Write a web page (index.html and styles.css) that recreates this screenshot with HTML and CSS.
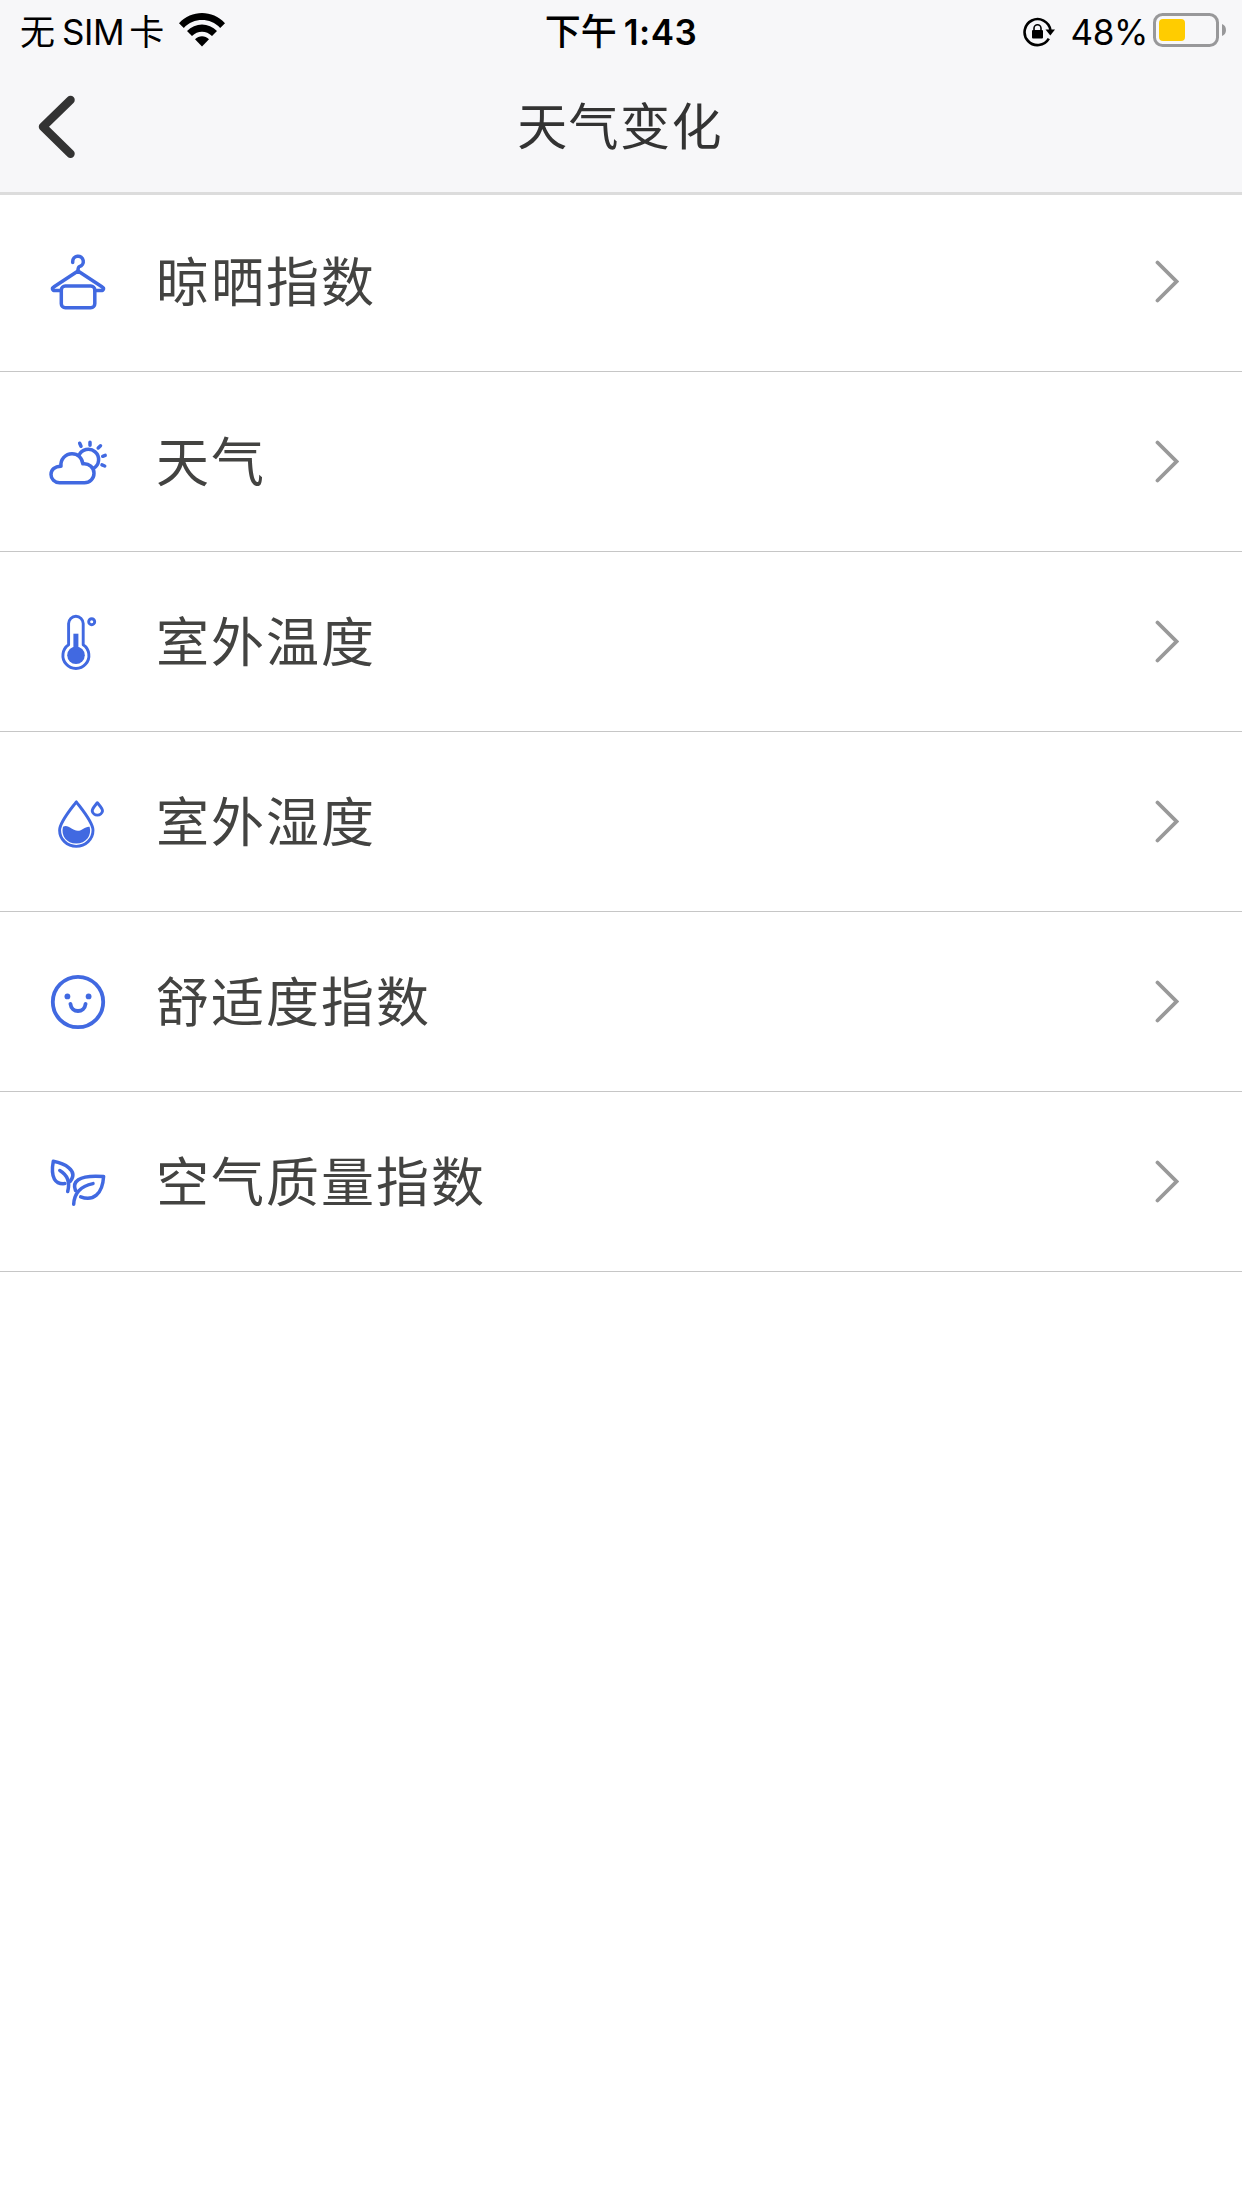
FILE: index.html
```html
<!DOCTYPE html>
<html lang="zh-CN">
<head>
    <meta charset="UTF-8">
    <meta name="viewport" content="width=device-width, initial-scale=1.0">
    <title>天气变化</title>
    <link rel="stylesheet" href="styles.css">
</head>
<body>
    <header class="header">
        <!-- Status bar -->
        <div class="status-bar">
            <div class="status-left">
                <span class="carrier">无<span class="sim">SIM</span>卡</span>
                <svg class="wifi" width="46" height="34" viewBox="0 0 46 34">
                    <path d="M0 10.2C12.5-3.4 33.5-3.4 46 10.2L41.2 15C31.2 4.4 14.8 4.4 4.8 15Z"/>
                    <path d="M8 18C16.2 9.2 29.8 9.2 38 18L33 23C27.4 17.2 18.6 17.2 13 23Z"/>
                    <path d="M16 26.2C20 22.2 26 22.2 30 26.2L23 33.5Z"/>
                </svg>
            </div>
            <div class="status-time">下午<span class="clock">1:43</span></div>
            <div class="status-right">
                <svg class="rotation-lock" width="32" height="30" viewBox="0 0 32 30">
                    <path class="ring" d="M25.8 21.7A13 13 0 1 1 27.4 13"/>
                    <path d="M22.5 12.5H32L27.3 18.6Z"/>
                    <rect x="9" y="13" width="11" height="8.5" rx="1"/>
                    <path class="shackle" d="M11 14V11.2A3.4 3.4 0 0 1 18 11.2V14"/>
                </svg>
                <span class="percent">48%</span>
                <svg class="battery" width="74" height="34" viewBox="0 0 74 34">
                    <rect class="case" x="1.5" y="1.5" width="63" height="31" rx="8"/>
                    <rect class="level" x="6" y="6" width="26" height="22" rx="4"/>
                    <path class="nub" d="M69 11C74.3 12.5 74.3 21.5 69 23Z"/>
                </svg>
            </div>
        </div>

        <!-- Navigation bar -->
        <nav class="nav-bar">
            <a class="back" href="#">
                <svg width="40" height="64" viewBox="0 0 40 64">
                    <path d="M34.5 5L7 31.8L34.5 58.7"/>
                </svg>
            </a>
            <h1>天气变化</h1>
        </nav>
    </header>

    <main>
        <ul class="menu">
            <li class="menu-item">
                <svg class="icon" viewBox="0 0 60 60">
                    <path d="M24.7 10.6V9.6A5.3 5.3 0 1 1 31.4 14.6Q30 15.2 30 18.8"/>
                    <path d="M13 38.5H7C4.2 38.5 3.7 36.2 5.7 35L30 19L54.3 35C56.3 36.2 55.8 38.5 53 38.5H47"/>
                    <rect x="13.3" y="34" width="33.5" height="21.7" rx="4"/>
                </svg>
                <span class="label">晾晒指数</span>
                <svg class="arrow" viewBox="0 0 24 44"><path d="M2.5 2.5L21.5 21.5L2.5 40.5"/></svg>
            </li>
            <li class="menu-item">
                <svg class="icon" viewBox="0 0 60 60">
                    <path d="M11.5 50.7C6.5 50.7 3 47 3 42.4C3 38 6.5 34.2 13 34.2C12.2 27.5 17.5 21.7 24 21.7C29.7 21.7 34.2 25.8 34.8 31.8C41 31 46 35.5 46 41.2C46 46.5 41.8 50.7 36.5 50.7Z"/>
                    <path d="M30.8 23.6A10.3 10.3 0 1 1 45.4 36.5"/>
                    <path d="M31.7 11.2L33 14.3M42 10.3V13.3M52.5 13.8L50.2 16M57.2 23.3L54.7 24.3M54 32.9L56.7 34"/>
                </svg>
                <span class="label">天气</span>
                <svg class="arrow" viewBox="0 0 24 44"><path d="M2.5 2.5L21.5 21.5L2.5 40.5"/></svg>
            </li>
            <li class="menu-item">
                <svg class="icon thin" viewBox="0 0 60 60">
                    <path d="M20.6 32.7V11.6A7.3 7.3 0 0 1 35.2 11.6V32.7A13 13 0 1 1 20.6 32.7Z"/>
                    <circle class="solid" cx="28" cy="43.3" r="8.8"/>
                    <rect class="solid" x="25.4" y="21.7" width="5" height="16"/>
                    <circle cx="43.7" cy="9.7" r="3"/>
                </svg>
                <span class="label">室外温度</span>
                <svg class="arrow" viewBox="0 0 24 44"><path d="M2.5 2.5L21.5 21.5L2.5 40.5"/></svg>
            </li>
            <li class="menu-item">
                <svg class="icon thin" viewBox="0 0 60 60">
                    <path d="M28.3 9.8C23 17 11.6 30 11.6 38.2A16.7 16.2 0 0 0 45 38.2C45 30 33.6 17 28.3 9.8Z"/>
                    <path class="solid" d="M15 34.8C19 32.2 22.5 36 26 37.7C33 41.3 36 34 41.6 34.7C44 43.5 38 51.6 28.3 51.6C18.5 51.6 12.7 43.5 15 34.8Z"/>
                    <path d="M49.3 10.7C47.5 13.2 44.2 16.2 44.2 19A5.2 4.8 0 0 0 54.5 19C54.5 16.2 51.1 13.2 49.3 10.7Z"/>
                </svg>
                <span class="label">室外湿度</span>
                <svg class="arrow" viewBox="0 0 24 44"><path d="M2.5 2.5L21.5 21.5L2.5 40.5"/></svg>
            </li>
            <li class="menu-item">
                <svg class="icon smile" viewBox="0 0 60 60">
                    <circle cx="30" cy="30" r="25.2"/>
                    <circle class="solid" cx="19.4" cy="24.4" r="2.9"/>
                    <circle class="solid" cx="40.6" cy="24.4" r="2.9"/>
                    <path d="M22.4 31.8C23.5 41.4 36.5 41.4 37.6 31.8"/>
                </svg>
                <span class="label">舒适度指数</span>
                <svg class="arrow" viewBox="0 0 24 44"><path d="M2.5 2.5L21.5 21.5L2.5 40.5"/></svg>
            </li>
            <li class="menu-item">
                <svg class="icon" viewBox="0 0 60 60">
                    <path d="M16.8 31.6C7.5 32.5 2.2 26 5.3 9.3C15.5 11.2 31 18 22.2 29.5"/>
                    <path d="M11.8 18.5C18.5 22.5 22.5 29 19.7 39.5"/>
                    <path d="M27.5 38.5C24.2 30.5 29 22.4 55.6 24.5C54.5 42.5 45 49.5 32.7 44.8"/>
                    <path d="M45 31.6C33.5 34 26.2 40 25.7 52.3"/>
                </svg>
                <span class="label">空气质量指数</span>
                <svg class="arrow" viewBox="0 0 24 44"><path d="M2.5 2.5L21.5 21.5L2.5 40.5"/></svg>
            </li>
        </ul>
    </main>
</body>
</html>
```
FILE: styles.css
```css
body, h1, ul, li {
    margin: 0;
    padding: 0;
    box-sizing: border-box;
}

body {
    font-family: Inter, "Noto Sans CJK SC", sans-serif;
    background: #fff;
    color: #434341;
    min-height: 100vh;
}

svg {
    display: block;
    flex-shrink: 0;
}

/* Header */
.header {
    position: relative;
    height: 192px;
    background: #f7f7f9;
    box-shadow: 0 3px 0 #dcdcdc;
}

.status-bar {
    display: grid;
    grid-template-columns: 1fr auto 1fr;
    align-items: center;
    height: 60px;
    padding: 0 15px 0 20px;
    font-size: 35px;
    line-height: 56px;
    color: #000;
}

.status-left, .status-right {
    display: flex;
    align-items: center;
}

.status-right {
    justify-content: flex-end;
}

.carrier, .status-time, .percent {
    padding-top: 3px;
}

.carrier {
    font-weight: 400;
}

.sim {
    margin: 0 5px 0 7px;
    letter-spacing: -0.4px;
}

.wifi {
    margin-left: 15px;
}

.status-time {
    padding-right: 5px;
    font-size: 36px;
    font-weight: 500;
}

.clock {
    font-size: 35px;
    font-weight: 600;
    margin-left: 7px;
    letter-spacing: 0.5px;
}

.rotation-lock {
    margin-top: 3px;
}

.rotation-lock .ring, .rotation-lock .shackle {
    fill: none;
    stroke: #000;
    stroke-width: 2.6;
}

.rotation-lock .shackle {
    stroke-width: 1.6;
}

.percent {
    margin: 0 5px 0 16px;
    letter-spacing: -0.4px;
}

.battery .case {
    fill: none;
    stroke: #98989a;
    stroke-width: 3;
}

.battery .level {
    fill: #fc0;
}

.battery .nub {
    fill: #98989a;
}

.nav-bar {
    display: grid;
    grid-template-columns: 120px 1fr 120px;
    align-items: center;
    height: 132px;
}

.back {
    padding-left: 36px;
}

.back svg {
    margin-top: 1px;
}

.back path {
    fill: none;
    stroke: #333;
    stroke-width: 8.5;
    stroke-linecap: round;
    stroke-linejoin: round;
}

.nav-bar h1 {
    padding: 1px 2px 0 0;
    font-size: 50px;
    font-weight: 400;
    line-height: 72px;
    letter-spacing: 1.4px;
    text-align: center;
    color: #333;
}

/* Menu list */
.menu {
    list-style: none;
}

.menu-item {
    display: flex;
    align-items: center;
    height: 180px;
    padding: 0 63.5px 0 48px;
    border-bottom: 1px solid #c6c6c6;
}

.icon {
    width: 60px;
    height: 60px;
    fill: none;
    stroke: #4169e1;
    stroke-width: 3.5;
    stroke-linecap: round;
    stroke-linejoin: round;
}

.icon.thin {
    stroke-width: 2.9;
}

.icon.smile {
    stroke-width: 3.8;
}

.icon .solid {
    fill: #4169e1;
    stroke: none;
}

.label {
    flex: 1;
    margin-left: 48px;
    padding-top: 3px;
    font-size: 53px;
    line-height: 76px;
    letter-spacing: 2px;
}

.arrow {
    width: 24px;
    height: 44px;
    fill: none;
    stroke: #999;
    stroke-width: 3.8;
    stroke-linecap: round;
}
```
